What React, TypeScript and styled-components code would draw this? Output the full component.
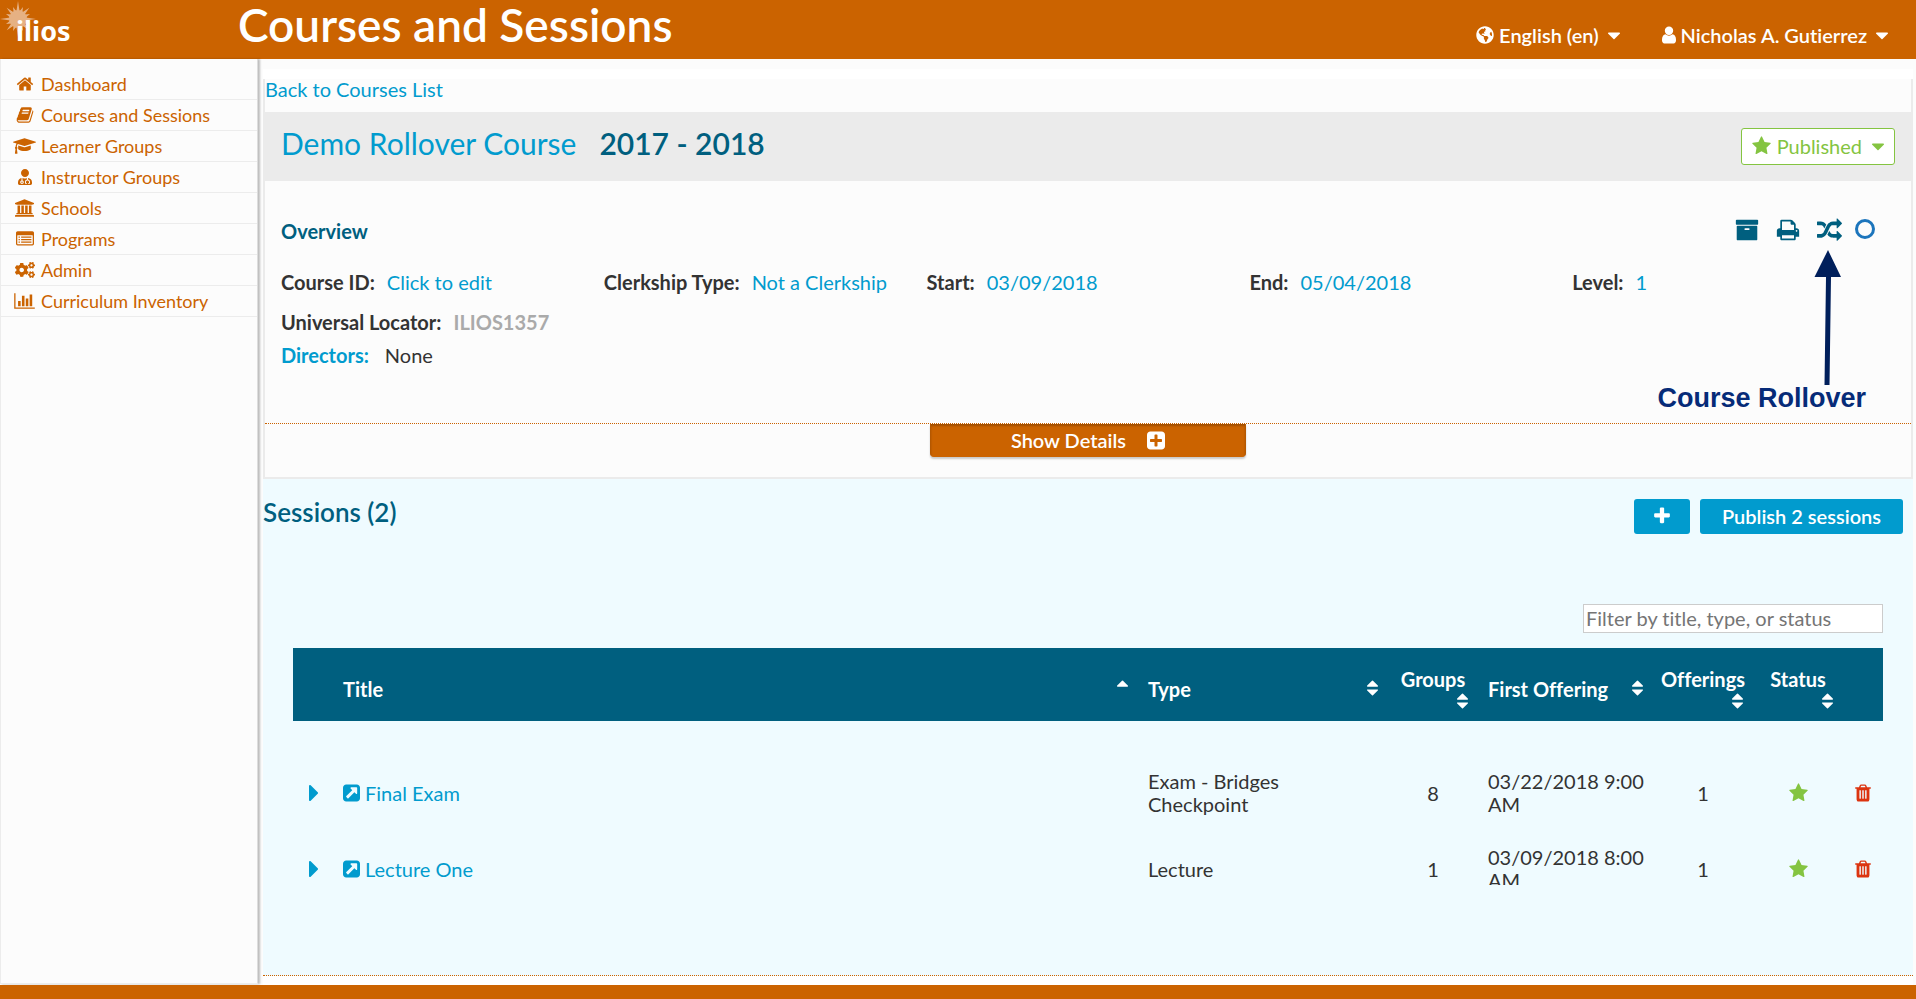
import React from 'react';
import styled, { createGlobalStyle } from 'styled-components';
import { FaCogs, FaGlobeAmericas, FaUserMd } from 'react-icons/fa';

const orange = '#cb6300';
const link = '#019bce';
const teal = '#005f7f';
const green = '#84c441';
const pale = '#fcfcfc';

const GlobalStyle = createGlobalStyle`
  *, *::before, *::after { box-sizing: border-box; }
  body {
    margin: 0;
    background: ${pale};
    color: #333;
    font-family: Lato, "Open Sans", sans-serif;
    font-size: 20px;
    font-variant-ligatures: none;
    line-height: 24px;
  }
  button, input { font: inherit; font-variant-ligatures: none; }
  a { color: ${link}; text-decoration: none; }
  h1, h2, h3, ul, dl, dd, figure { margin: 0; padding: 0; }
`;

/* ---------- icons ---------- */

type Glyph = { box: string; d: string; ratio: number };

const glyphs: Record<string, Glyph> = {
  home: { box: '0 0 1792 1792', ratio: 1, d: 'M1472 992v480q0 26-19 45t-45 19h-384v-384h-256v384h-384q-26 0-45-19t-19-45v-480q0-1 .5-3t.5-3l575-474 575 474q1 2 1 6zm223-69l-62 74q-8 9-21 11h-3q-13 0-21-7l-692-577-692 577q-12 8-24 7-13-2-21-11l-62-74q-8-10-7-23.5t11-21.5l719-599q32-26 76-26t76 26l244 204v-195q0-14 9-23t23-9h192q14 0 23 9t9 23v408l219 182q10 8 11 21.5t-7 23.5z' },
  book: { box: '0 0 1792 1792', ratio: 1, d: 'M1703 478q40 57 18 129l-275 906q-19 64-76.5 107.5t-122.5 43.5h-923q-77 0-148.5-53.5t-99.5-131.5q-24-67-2-127 0-4 3-27t4-37q1-8-3-21.5t-3-19.5q2-11 8-21t16.5-23.5 16.5-23.5q23-38 45-91.5t30-91.5q3-10 .5-30t-.5-28q3-11 17-28t17-23q21-36 42-92t25-90q1-9-2.5-32t.5-28q4-13 22-30.5t22-22.5q19-26 42.5-84.5t27.5-96.5q1-8-3-25.5t-2-26.5q2-8 9-18t18-23 17-21q8-12 16.5-30.5t15-35 16-36 19.5-32 26.5-23.5 36-11.5 47.5 5.5l-1 3q38-9 51-9h761q74 0 114 56t18 130l-274 906q-36 119-71.5 153.5t-128.5 34.5h-869q-27 0-38 15-11 16-1 43 24 70 144 70h923q29 0 56-15.5t35-41.5l300-987q7-22 5-57 38 15 59 43zm-1064 2q-4 13 2 22.5t20 9.5h608q13 0 25.5-9.5t16.5-22.5l21-64q4-13-2-22.5t-20-9.5h-608q-13 0-25.5 9.5t-16.5 22.5zm-83 256q-4 13 2 22.5t20 9.5h608q13 0 25.5-9.5t16.5-22.5l21-64q4-13-2-22.5t-20-9.5h-608q-13 0-25.5 9.5t-16.5 22.5z' },
  cap: { box: '0 0 2304 1792', ratio: 2304 / 1792, d: 'M1774 836l18 316q4 69-82 128t-235 93.5-323 34.5-323-34.5-235-93.5-82-128l18-316 574 181q22 7 48 7t48-7zm530-324q0 23-22 31l-1120 352q-4 1-10 1t-10-1l-652-206q-43 34-71 111.5t-34 178.5q63 36 63 109 0 69-58 107l58 433q2 14-8 25-9 11-24 11h-192q-15 0-24-11-10-11-8-25l58-433q-58-38-58-107 0-73 65-111 11-207 98-330l-333-104q-22-8-22-31t22-31l1120-352q4-1 10-1t10 1l1120 352q22 8 22 31z' },
  bank: { box: '-128 0 1920 1792', ratio: 1920 / 1792, d: 'M832 0l960 384v128h-128q0 26-20.5 45t-48.5 19h-1526q-28 0-48.5-19t-20.5-45h-128v-128zm-704 640h256v768h128v-768h256v768h128v-768h256v768h128v-768h256v768h59q28 0 48.5 19t20.5 45v64h-1664v-64q0-26 20.5-45t48.5-19h59v-768zm1595 960q28 0 48.5 19t20.5 45v128h-1920v-128q0-26 20.5-45t48.5-19h1782z' },
  list: { box: '0 0 1792 1792', ratio: 1, d: 'M160 128h1472q66 0 113 47t47 113v1088q0 66-47 113t-113 47h-1472q-66 0-113-47t-47-113v-1088q0-66 47-113t113-47zm0 384q-32 0-32 32v832q0 32 32 32h1472q32 0 32-32v-832q0-32-32-32zM256 640h128v128h-128zM512 640h1024v128h-1024zM256 896h128v128h-128zM512 896h1024v128h-1024zM256 1152h128v128h-128zM512 1152h1024v128h-1024z' },
  chart: { box: '0 0 2048 1792', ratio: 2048 / 1792, d: 'M640 896v512h-256v-512h256zm384-512v1024h-256v-1024h256zm1024 1152v128h-2048v-1536h128v1408h1920zm-640-896v768h-256v-768h256zm384-384v1152h-256v-1152h256z' },
  user: { box: '256 0 1280 1792', ratio: 1280 / 1792, d: 'M1536 1399q0 109-62.5 187t-150.5 78h-854q-88 0-150.5-78t-62.5-187q0-85 8.5-160.5t31.5-152 58.5-131 94-89 134.5-34.5q131 128 313 128t313-128q76 0 134.5 34.5t94 89 58.5 131 31.5 152 8.5 160.5zm-256-887q0 159-112.5 271.5t-271.5 112.5-271.5-112.5-112.5-271.5 112.5-271.5 271.5-112.5 271.5 112.5 112.5 271.5z' },
  star: { box: '64 0 1664 1792', ratio: 1664 / 1792, d: 'M1728 647q0 22-26 48l-363 354 86 500q1 7 1 20 0 21-10.5 35.5t-30.5 14.5q-19 0-40-12l-449-236-449 236q-22 12-40 12-21 0-31.5-14.5t-10.5-35.5q0-6 2-20l86-500-364-354q-25-27-25-48 0-37 56-46l502-73 225-455q19-41 49-41t49 41l225 455 502 73q56 9 56 46z' },
  caret: { box: '384 0 1024 1792', ratio: 1024 / 1792, d: 'M1408 704q0 26-19 45l-448 448q-19 19-45 19t-45-19l-448-448q-19-19-19-45t19-45 45-19h896q26 0 45 19t19 45z' },
  caretRight: { box: '576 0 640 1792', ratio: 640 / 1792, d: 'M1216 896q0 26-19 45l-448 448q-19 19-45 19t-45-19-19-45v-896q0-26 19-45t45-19 45 19l448 448q19 19 19 45z' },
  sort: { box: '384 0 1024 1792', ratio: 1024 / 1792, d: 'M1408 1088q0 26-19 45l-448 448q-19 19-45 19t-45-19l-448-448q-19-19-19-45t19-45 45-19h896q26 0 45 19t19 45zm0-384q0 26-19 45t-45 19h-896q-26 0-45-19t-19-45 19-45l448-448q19-19 45-19t45 19l448 448q19 19 19 45z' },
  sortUp: { box: '384 0 1024 1792', ratio: 1024 / 1792, d: 'M1408 704q0 26-19 45t-45 19h-896q-26 0-45-19t-19-45 19-45l448-448q19-19 45-19t45 19l448 448q19 19 19 45z' },
  trash: { box: '192 0 1408 1792', ratio: 1408 / 1792, d: 'M704 1376v-704q0-14-9-23t-23-9h-64q-14 0-23 9t-9 23v704q0 14 9 23t23 9h64q14 0 23-9t9-23zm256 0v-704q0-14-9-23t-23-9h-64q-14 0-23 9t-9 23v704q0 14 9 23t23 9h64q14 0 23-9t9-23zm256 0v-704q0-14-9-23t-23-9h-64q-14 0-23 9t-9 23v704q0 14 9 23t23 9h64q14 0 23-9t9-23zm-544-992h448l-48-117q-7-9-17-11h-317q-10 2-17 11zm928 32v64q0 14-9 23t-23 9h-96v948q0 83-47 143.5t-113 60.5h-832q-66 0-113-58.5t-47-141.5v-952h-96q-14 0-23-9t-9-23v-64q0-14 9-23t23-9h309l70-167q15-37 54-63t79-26h320q40 0 79 26t54 63l70 167h309q14 0 23 9t9 23z' },
  archive: { box: '0 0 1792 1792', ratio: 1, d: 'M1088 832q0-26-19-45t-45-19h-256q-26 0-45 19t-19 45 19 45 45 19h256q26 0 45-19t19-45zm576-192v960q0 26-19 45t-45 19h-1408q-26 0-45-19t-19-45v-960q0-26 19-45t45-19h1408q26 0 45 19t19 45zm64-448v256q0 26-19 45t-45 19h-1536q-26 0-45-19t-19-45v-256q0-26 19-45t45-19h1536q26 0 45 19t19 45z' },
  print: { box: '0 0 1792 1792', ratio: 1, d: 'M448 1536h896v-256h-896v256zm0-640h896v-384h-160q-40 0-68-28t-28-68v-160h-640v640zm1152 64q0-26-19-45t-45-19-45 19-19 45 19 45 45 19 45-19 19-45zm128 0v416q0 13-9.5 22.5t-22.5 9.5h-224v160q0 40-28 68t-68 28h-960q-40 0-68-28t-28-68v-160h-224q-13 0-22.5-9.5t-9.5-22.5v-416q0-79 56.5-135.5t135.5-56.5h64v-544q0-40 28-68t68-28h672q40 0 88 20t76 48l152 152q28 28 48 76t20 88v256h64q79 0 135.5 56.5t56.5 135.5z' },
  random: { box: '0 0 1792 1792', ratio: 1, d: 'M666 481q-60 92-137 273-22-45-37-72.5t-40.5-63.5-51-56.5-63-35-81.5-14.5h-224q-14 0-23-9t-9-23v-192q0-14 9-23t23-9h224q250 0 410 225zm1126 799q0 14-9 23l-320 320q-9 9-23 9-13 0-22.5-9.5t-9.5-22.5v-192q-32 0-85 .5t-81 1-73-1-71-5-64-10.5-63-18.5-58-28.5-59-40-55-53.5-56-69.5q59-93 136-273 22 45 37 72.5t40.5 63.5 51 56.5 63 35 81.5 14.5h256v-192q0-14 9-23t23-9q12 0 24 10l319 319q9 9 9 23zm0-896q0 14-9 23l-320 320q-9 9-23 9-13 0-22.5-9.5t-9.5-22.5v-192h-256q-48 0-87 15t-69 45-51 61.5-45 77.5q-32 62-78 171-29 66-49.5 111t-54 105-64 100-74 83-90 68.5-106.5 42-128 16.5h-224q-14 0-23-9t-9-23v-192q0-14 9-23t23-9h224q48 0 87-15t69-45 51-61.5 45-77.5q32-62 78-171 29-66 49.5-111t54-105 64-100 74-83 90-68.5 106.5-42 128-16.5h256v-192q0-14 9-23t23-9q12 0 24 10l319 319q9 9 9 23z' },
  plus: { box: '192 0 1408 1792', ratio: 1408 / 1792, d: 'M1600 736v192q0 40-28 68t-68 28h-416v416q0 40-28 68t-68 28h-192q-40 0-68-28t-28-68v-416h-416q-40 0-68-28t-28-68v-192q0-40 28-68t68-28h416v-416q0-40 28-68t68-28h192q40 0 68 28t28 68v416h416q40 0 68 28t28 68z' },
  plusSquare: { box: '128 0 1536 1792', ratio: 1536 / 1792, d: 'M1408 960v-128q0-26-19-45t-45-19h-320v-320q0-26-19-45t-45-19h-128q-26 0-45 19t-19 45v320h-320q-26 0-45 19t-19 45v128q0 26 19 45t45 19h320v320q0 26 19 45t45 19h128q26 0 45-19t19-45v-320h320q26 0 45-19t19-45zm256-544v960q0 119-84.5 203.5t-203.5 84.5h-960q-119 0-203.5-84.5t-84.5-203.5v-960q0-119 84.5-203.5t203.5-84.5h960q119 0 203.5 84.5t84.5 203.5z' },
  external: { box: '128 0 1536 1792', ratio: 1536 / 1792, d: 'M1408 928v-480q0-26-19-45t-45-19h-480q-42 0-59 39-17 41 14 70l144 144-534 534q-19 19-19 45t19 45l102 102q19 19 45 19t45-19l534-534 144 144q18 19 45 19 12 0 25-5 39-17 39-59zm256-512v960q0 119-84.5 203.5t-203.5 84.5h-960q-119 0-203.5-84.5t-84.5-203.5v-960q0-119 84.5-203.5t203.5-84.5h960q119 0 203.5 84.5t84.5 203.5z' },
};

const Svg = styled.svg`
  display: block;
  flex: none;
  fill: currentColor;
  fill-rule: evenodd;
`;

function Icon({ name, size = 20 }: { name: string; size?: number }) {
  const g = glyphs[name];
  return (
    <Svg width={Math.round(size * g.ratio)} height={size} viewBox={g.box} aria-hidden="true">
      <path d={g.d} />
    </Svg>
  );
}

function Sun() {
  const rays = Array.from({ length: 32 }, (_, i) => {
    const r = i % 2 ? 8 : i % 8 === 0 ? 18 : i % 4 === 0 ? 16 : 13;
    const a = (i * Math.PI) / 16;
    return `${(18 + r * Math.sin(a)).toFixed(1)},${(18 - r * Math.cos(a)).toFixed(1)}`;
  });
  return (
    <svg width="36" height="36" viewBox="0 0 36 36" aria-hidden="true">
      <polygon points={rays.join(' ')} fill="#e6b183" />
      <circle cx="18" cy="18" r="9" fill="#e6b183" />
    </svg>
  );
}

/* ---------- frame ---------- */

const Page = styled.div`
  display: flex;
  flex-direction: column;
  min-height: 100vh;
`;

const TopBar = styled.header`
  display: flex;
  height: 59px;
  padding-right: 28px;
  background: ${orange};
  color: #fff;
`;

const Logo = styled.a`
  position: relative;
  width: 238px;
  padding: 14px 0 0 16px;
  color: #fff;
  font: 700 27px/34px "Noto Sans", sans-serif;
`;

const LogoSun = styled.span`
  position: absolute;
  top: 1px;
  left: 0;
  line-height: 0;
`;

const LogoText = styled.span`
  position: relative;
`;

const PageTitle = styled.h1`
  flex: 1;
  font-size: 46px;
  font-weight: 600;
  line-height: 50px;
`;

const UserMenu = styled.nav`
  display: flex;
  gap: 42px;
  height: 46px;
  padding-top: 22px;
`;

const MenuButton = styled.button`
  display: flex;
  align-items: center;
  gap: 5px;
  height: 25px;
  padding: 0;
  border: 0;
  background: none;
  color: #fff;
  font-weight: 600;
  line-height: 24px;
`;

const CaretGap = styled.span`
  padding: 2px 0 0 4px;
`;

const Body = styled.div`
  display: flex;
  flex: 1;
`;

const Sidebar = styled.nav`
  width: 258px;
  flex: none;
  padding-top: 10px;
  margin-bottom: 1px;
  border: 1px solid #ececec;
  border-right-color: #ddd;
  border-top: 0;
  background: ${pale};
  box-shadow: 2px 0 2px rgba(0, 0, 0, 0.25);
`;

const NavList = styled.ul`
  list-style: none;
`;

const NavItem = styled.li`
  border-bottom: 1px solid #ececec;
`;

const NavLink = styled.a`
  display: flex;
  align-items: center;
  gap: 5px;
  height: 30px;
  padding: 0 0 1px 12px;
  color: ${orange};
  font-size: 18px;
`;

const NavIcon = styled.span`
  display: flex;
  justify-content: center;
  width: 23px;
`;

const Main = styled.main`
  display: flex;
  flex: 1;
  flex-direction: column;
  margin: 10px 3px 0 5px;
  padding: 10px 0 9px;
  background: #fff;
`;

const Footer = styled.footer`
  height: 14px;
  background: ${orange};
`;

/* ---------- course ---------- */

const Course = styled.section`
  border: 2px solid #ebebeb;
  border-top: 0;
  background: ${pale};
`;

const BackLink = styled.a`
  display: block;
  padding-bottom: 13px;
  line-height: 20px;
`;

const CourseHeader = styled.header`
  display: flex;
  align-items: center;
  justify-content: space-between;
  height: 69px;
  padding: 0 16px;
  background: #ebebeb;
`;

const CourseTitle = styled.h2`
  display: flex;
  gap: 23px;
  padding-bottom: 8px;
  color: ${teal};
  font-size: 30px;
  font-weight: 600;
  line-height: 36px;
`;

const CourseName = styled.a`
  font-weight: 400;
`;

const StatusButton = styled.button`
  display: flex;
  align-items: center;
  gap: 6px;
  height: 37px;
  padding: 0 10px 2px;
  border: 1px solid ${green};
  border-radius: 3px;
  background: #fff;
  color: ${green};
`;

const Overview = styled.div`
  position: relative;
  padding: 38px 16px 56px;
  border-bottom: 1px dotted ${orange};
`;

const OverviewHead = styled.div`
  display: flex;
  justify-content: space-between;
  height: 51px;
`;

const OverviewTitle = styled.h3`
  color: ${teal};
  font-size: 20px;
  font-weight: 700;
`;

const Actions = styled.div`
  display: flex;
  align-items: center;
  gap: 17px;
  height: 22px;
  padding-right: 20px;
  color: ${teal};
`;

const Action = styled.a`
  color: ${teal};
`;

const Ring = styled.span`
  width: 20px;
  height: 20px;
  margin: 0 0 2px -4px;
  border: 3px solid #1c75bc;
  border-radius: 50%;
`;

const Fields = styled.dl`
  display: grid;
  grid-template-columns: repeat(5, 1fr);
`;

const Field = styled.div<{ $gap?: number }>`
  display: flex;
  gap: ${(p) => p.$gap ?? 12}px;
  white-space: nowrap;
`;

const FieldList = styled.div`
  display: grid;
  gap: 16px;
`;

const Term = styled.dt`
  font-weight: 700;
`;

const Muted = styled.dd`
  color: #aaa;
  font-weight: 700;
`;

const Directors = styled(Field)`
  margin-top: 9px;
`;

const Callout = styled.figure`
  position: absolute;
  right: 45px;
  top: 69px;
  display: flex;
  flex-direction: column;
  align-items: flex-end;
  pointer-events: none;
`;

const Arrow = styled.svg`
  display: block;
  margin-right: 24px;
`;

const CalloutText = styled.figcaption`
  color: #062b78;
  font: 700 27px/27px "Liberation Sans", Arial, sans-serif;
`;

const DetailsBar = styled.div`
  display: flex;
  justify-content: center;
  height: 53px;
`;

const DetailsButton = styled.button`
  display: flex;
  align-items: center;
  justify-content: center;
  gap: 21px;
  width: 316px;
  height: 33px;
  padding: 0;
  border: 1px solid #b55800;
  border-top: 0;
  border-bottom-color: ${orange};
  border-radius: 0 0 4px 4px;
  background: ${orange};
  box-shadow: 0 2px 2px rgba(0, 0, 0, 0.2), inset 0 2px 2px rgba(0, 0, 0, 0.2);
  color: #fff;
  font-weight: 600;
`;

/* ---------- sessions ---------- */

const Sessions = styled.section`
  display: flex;
  flex: 1;
  flex-direction: column;
  border-bottom: 1px dotted ${orange};
  background: #effbff;
`;

const SessionsHead = styled.div`
  display: flex;
  justify-content: space-between;
  height: 125px;
  padding: 16px 10px 0 0;
`;

const SessionsTitle = styled.h2`
  color: ${teal};
  font-size: 26px;
  font-weight: 600;
  line-height: 34px;
`;

const Buttons = styled.div`
  display: flex;
  gap: 10px;
  padding-top: 4px;
`;

const BlueButton = styled.button<{ $pad: number }>`
  display: flex;
  align-items: center;
  height: 35px;
  padding: 0 ${(p) => p.$pad}px 1px;
  border: 0;
  border-radius: 3px;
  background: ${link};
  color: #fff;
  font-weight: 600;
`;

const Filter = styled.input`
  align-self: flex-end;
  width: 300px;
  height: 29px;
  margin: 0 30px 15px 0;
  padding: 0 2px 1px;
  border: 1px solid #ccc;
  background: #fff;
  &::placeholder { color: #757575; opacity: 1; }
`;

const TableClip = styled.div`
  max-height: 237px;
  margin: 0 30px;
  overflow: hidden;
`;

const Table = styled.table`
  width: 100%;
  border-collapse: collapse;
  table-layout: fixed;
`;

const Col = styled.col<{ $w?: number }>`
  width: ${(p) => (p.$w ? `${p.$w}px` : 'auto')};
`;

const Th = styled.th`
  height: 73px;
  padding: 9px 10px 0;
  background: ${teal};
  color: #fff;
  font-weight: 700;
  line-height: 23px;
  text-align: left;
`;

const Sorter = styled.button<{ $stacked?: boolean }>`
  display: flex;
  flex-direction: ${(p) => (p.$stacked ? 'column' : 'row')};
  justify-content: space-between;
  align-items: ${(p) => (p.$stacked ? 'flex-end' : 'flex-start')};
  width: 100%;
  padding: 0;
  border: 0;
  background: none;
  color: inherit;
  line-height: 23px;
`;

const SorterLabel = styled.span<{ $stacked?: boolean }>`
  ${(p) => p.$stacked && 'align-self: center;'}
`;

const Td = styled.td<{ $center?: boolean }>`
  height: 76px;
  padding: 15px 5px 15px 10px;
  line-height: 23px;
  text-align: ${(p) => (p.$center ? 'center' : 'left')};
  ${(p) => p.$center && 'padding-right: 10px;'}
  tr:first-child > & {
    height: 110px;
    padding-top: 49px;
  }
`;

const IconTd = styled(Td)`
  padding-left: 0;
  padding-right: 0;
`;

const Cell = styled.span<{ $color: string }>`
  display: flex;
  justify-content: center;
  color: ${(p) => p.$color};
`;

const SessionLink = styled.a`
  display: flex;
  align-items: center;
  gap: 5px;
`;

const navItems: [string, React.ReactNode][] = [
  ['Dashboard', <Icon name="home" size={18} />],
  ['Courses and Sessions', <Icon name="book" size={18} />],
  ['Learner Groups', <Icon name="cap" size={18} />],
  ['Instructor Groups', <FaUserMd size={16} />],
  ['Schools', <Icon name="bank" size={18} />],
  ['Programs', <Icon name="list" size={18} />],
  ['Admin', <FaCogs size={20} />],
  ['Curriculum Inventory', <Icon name="chart" size={18} />],
];

const fields: [string, string][] = [
  ['Course ID:', 'Click to edit'],
  ['Clerkship Type:', 'Not a Clerkship'],
  ['Start:', '03/09/2018'],
  ['End:', '05/04/2018'],
  ['Level:', '1'],
];

const columns: { label: string; stacked?: boolean; icon: string }[] = [
  { label: 'Title', icon: 'sortUp' },
  { label: 'Type', icon: 'sort' },
  { label: 'Groups', icon: 'sort', stacked: true },
  { label: 'First Offering', icon: 'sort' },
  { label: 'Offerings', icon: 'sort', stacked: true },
  { label: 'Status', icon: 'sort', stacked: true },
];

const sessions = [
  { title: 'Final Exam', type: 'Exam - Bridges Checkpoint', groups: 8, first: '03/22/2018 9:00 AM', offerings: 1 },
  { title: 'Lecture One', type: 'Lecture', groups: 1, first: '03/09/2018 8:00 AM', offerings: 1 },
];

export default function App() {
  return (
    <Page>
      <GlobalStyle />
      <TopBar>
        <Logo href="#">
          <LogoSun><Sun /></LogoSun>
          <LogoText>ilios</LogoText>
        </Logo>
        <PageTitle>Courses and Sessions</PageTitle>
        <UserMenu aria-label="User">
          <MenuButton type="button">
            <FaGlobeAmericas size={18} />English (en)<CaretGap><Icon name="caret" size={21} /></CaretGap>
          </MenuButton>
          <MenuButton type="button">
            <Icon name="user" />Nicholas A. Gutierrez<CaretGap><Icon name="caret" size={21} /></CaretGap>
          </MenuButton>
        </UserMenu>
      </TopBar>
      <Body>
        <Sidebar aria-label="Main">
          <NavList>
            {navItems.map(([label, icon]) => (
              <NavItem key={label}>
                <NavLink href="#"><NavIcon>{icon}</NavIcon>{label}</NavLink>
              </NavItem>
            ))}
          </NavList>
        </Sidebar>
        <Main>
          <Course>
            <BackLink href="#">Back to Courses List</BackLink>
            <CourseHeader>
              <CourseTitle>
                <CourseName href="#">Demo Rollover Course</CourseName>
                <span>2017 - 2018</span>
              </CourseTitle>
              <StatusButton type="button">
                <Icon name="star" />Published<CaretGap><Icon name="caret" size={21} /></CaretGap>
              </StatusButton>
            </CourseHeader>
            <Overview>
              <OverviewHead>
                <OverviewTitle>Overview</OverviewTitle>
                <Actions>
                  <Action href="#" aria-label="Materials"><Icon name="archive" size={24} /></Action>
                  <Action href="#" aria-label="Print"><Icon name="print" size={24} /></Action>
                  <Action href="#" aria-label="Rollover"><Icon name="random" size={25} /></Action>
                  <Ring />
                </Actions>
              </OverviewHead>
              <FieldList>
                <Fields>
                  {fields.map(([term, value]) => (
                    <Field key={term}><Term>{term}</Term><dd><a href="#">{value}</a></dd></Field>
                  ))}
                </Fields>
                <dl>
                  <Field><Term>Universal Locator:</Term><Muted>ILIOS1357</Muted></Field>
                  <Directors $gap={16}><Term><a href="#">Directors:</a></Term><dd>None</dd></Directors>
                </dl>
              </FieldList>
              <Callout>
                <Arrow width="28" height="135" viewBox="0 0 28 135" aria-hidden="true">
                  <path d="M14 0L27 27H17L15.500 135H10.500L12 27H0.500Z" fill="#001f5b" />
                </Arrow>
                <CalloutText>Course Rollover</CalloutText>
              </Callout>
            </Overview>
            <DetailsBar>
              <DetailsButton type="button">Show Details<Icon name="plusSquare" size={21} /></DetailsButton>
            </DetailsBar>
          </Course>
          <Sessions>
            <SessionsHead>
              <SessionsTitle>Sessions (2)</SessionsTitle>
              <Buttons>
                <BlueButton type="button" $pad={20} aria-label="Add session"><Icon name="plus" /></BlueButton>
                <BlueButton type="button" $pad={22}>Publish 2 sessions</BlueButton>
              </Buttons>
            </SessionsHead>
            <Filter type="text" aria-label="Filter sessions" placeholder="Filter by title, type, or status" />
            <TableClip>
              <Table>
                <colgroup>
                  <Col $w={40} /><Col /><Col $w={250} /><Col $w={90} />
                  <Col $w={175} /><Col $w={100} /><Col $w={90} /><Col $w={40} />
                </colgroup>
                <thead>
                  <tr>
                    <Th />
                    {columns.map((c) => (
                      <Th key={c.label} scope="col">
                        <Sorter type="button" $stacked={c.stacked}>
                          <SorterLabel $stacked={c.stacked}>{c.label}</SorterLabel>
                          <Icon name={c.icon} />
                        </Sorter>
                      </Th>
                    ))}
                    <Th />
                  </tr>
                </thead>
                <tbody>
                  {sessions.map((s) => (
                    <tr key={s.title}>
                      <IconTd><Cell $color={link}><Icon name="caretRight" size={28} /></Cell></IconTd>
                      <Td><SessionLink href="#"><Icon name="external" />{s.title}</SessionLink></Td>
                      <Td>{s.type}</Td>
                      <Td $center>{s.groups}</Td>
                      <Td>{s.first}</Td>
                      <Td $center>{s.offerings}</Td>
                      <IconTd><Cell $color={green}><Icon name="star" /></Cell></IconTd>
                      <IconTd><Cell $color="#dc3410"><Icon name="trash" /></Cell></IconTd>
                    </tr>
                  ))}
                </tbody>
              </Table>
            </TableClip>
          </Sessions>
        </Main>
      </Body>
      <Footer />
    </Page>
  );
}
